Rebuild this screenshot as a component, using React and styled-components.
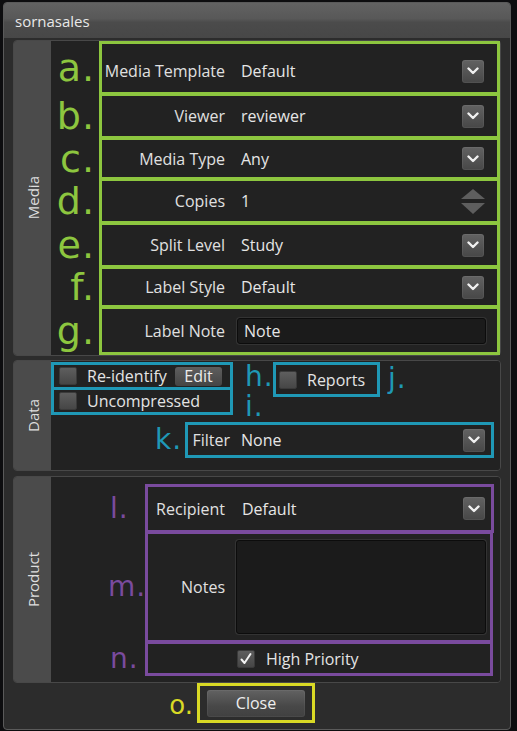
import React from 'react'
import styled, { createGlobalStyle } from 'styled-components'

const GREEN = '#8dc63f'
const TEAL = '#1f98b6'
const PURPLE = '#7a4b9e'
const YELLOW = '#d9d925'

const Global = createGlobalStyle`
  html, body {
    margin: 0;
    padding: 0;
    background: #0d0d0f;
  }
  body {
    font-family: "Open Sans", "Noto Sans", sans-serif;
    color: #e2e2e2;
  }
`

const Window = styled.div`
  margin: 2px 6px 0 3px;
  height: 726px;
  border: 1px solid #5a5a5a;
  border-radius: 4px;
  background: #2c2c2c;
  display: flex;
  flex-direction: column;
  overflow: hidden;
`

const TitleBar = styled.div`
  height: 35px;
  flex: none;
  display: flex;
  align-items: center;
  padding-left: 11px;
  font-size: 15px;
  color: #e8e8e8;
  background: linear-gradient(#626262 0%, #585858 45%, #4b4b4b 55%, #474747 100%);
`

const Body = styled.div`
  flex: 1;
  display: flex;
  flex-direction: column;
  padding: 2px 9px 0 9px;
`

const Section = styled.div`
  display: flex;
  box-sizing: border-box;
  border: 1px solid #484848;
  border-radius: 4px;
  margin-top: ${p => p.$gap || 0}px;
  height: ${p => p.$h}px;
  flex: none;
`

const Tab = styled.div`
  width: 37px;
  flex: none;
  background: #4b4b4b;
  border-radius: 3px 0 0 3px;
  display: flex;
  align-items: center;
  justify-content: center;
`

const TabText = styled.span`
  writing-mode: vertical-rl;
  transform: rotate(180deg);
  font-size: 15px;
  color: #dedede;
`

const Content = styled.div`
  flex: 1;
  background: #222222;
  border-radius: 0 3px 3px 0;
  display: flex;
  flex-direction: column;
  padding: ${p => p.$pad || '0'};
`

const Row = styled.div`
  display: flex;
  align-items: center;
  margin-top: ${p => p.$first ? 0 : -2}px;
`

const Letter = styled.div`
  font-family: "DejaVu Sans", sans-serif;
  font-size: ${p => p.$size || 38}px;
  color: ${p => p.$color};
  line-height: ${p => p.$lh ? `${p.$lh}px` : 1};
  width: ${p => p.$w || 48}px;
  flex: none;
  text-align: ${p => p.$align || 'right'};
  padding-right: ${p => p.$pr ?? 4}px;
  padding-left: ${p => p.$pl || 0}px;
  box-sizing: border-box;
  letter-spacing: 1px;
  white-space: nowrap;
`

const Box = styled.div`
  flex: 1;
  height: ${p => p.$h}px;
  box-sizing: border-box;
  border: 3px solid ${p => p.$color};
  display: flex;
  align-items: center;
  padding: ${p => p.$pad || '0 13px 0 0'};
`

const Label = styled.div`
  width: ${p => p.$w || 123}px;
  flex: none;
  text-align: right;
  font-size: 16px;
  color: #e0e0e0;
  margin-right: ${p => p.$gap || 16}px;
  white-space: nowrap;
`

const Value = styled.div`
  flex: 1;
  font-size: 16px;
  color: #e6e6e6;
`

const DropButton = styled.div`
  width: 22px;
  height: 23px;
  border-radius: 3px;
  background: linear-gradient(#626262, #474747);
  box-shadow: inset 0 0 0 1px rgba(255,255,255,0.06);
  display: flex;
  align-items: center;
  justify-content: center;
  flex: none;
`

const Chevron = () => (
  <svg width="12" height="8" viewBox="0 0 12 8">
    <path d="M1.5 1.5 L6 6 L10.5 1.5" fill="none" stroke="#f0f0f0" strokeWidth="2.4" strokeLinecap="round" strokeLinejoin="round" />
  </svg>
)

const Drop = () => (
  <DropButton><Chevron /></DropButton>
)

const Spinner = () => (
  <svg width="26" height="28" viewBox="0 0 26 28" style={{ marginRight: -2 }}>
    <polygon points="13,2 25,12 1,12" fill="#5e5e5e" />
    <polygon points="1,16 25,16 13,27" fill="#5e5e5e" />
  </svg>
)

const TextField = styled.div`
  flex: 1;
  height: ${p => p.$h || 26}px;
  box-sizing: border-box;
  background: #1b1b1b;
  border: 1px solid #0c0c0c;
  border-radius: 3px;
  box-shadow: 0 0 0 1px #333;
  font-size: 16px;
  color: #e6e6e6;
  display: flex;
  align-items: ${p => p.$top ? 'flex-start' : 'center'};
  padding-left: 6px;
`

const Check = styled.div`
  width: 18px;
  height: 18px;
  flex: none;
  box-sizing: border-box;
  border-radius: 2px;
  background: linear-gradient(#5e5e5e, #464646);
  border: 1px solid #3a3a3a;
  display: flex;
  align-items: center;
  justify-content: center;
  margin-right: ${p => p.$gap || 10}px;
`

const CheckText = styled.span`
  font-size: 16px;
  color: #e4e4e4;
  white-space: nowrap;
`

const SmallButton = styled.div`
  margin-left: auto;
  width: 47px;
  height: 19px;
  border-radius: 3px;
  background: linear-gradient(#5e5e5e, #454545);
  font-size: 16px;
  color: #ececec;
  display: flex;
  align-items: center;
  justify-content: center;
`

const DataTop = styled.div`
  display: flex;
  align-items: flex-start;
  margin-top: 1px;
`

const Stack = styled.div`
  width: 182px;
  flex: none;
  display: flex;
  flex-direction: column;
`

const LetterStack = styled.div`
  display: flex;
  flex-direction: column;
  width: 40px;
  padding-left: 12px;
  box-sizing: border-box;
`

const FilterRow = styled.div`
  display: flex;
  align-items: center;
  justify-content: flex-end;
  padding-right: 6px;
`

const Footer = styled.div`
  display: flex;
  justify-content: center;
  padding-right: 2px;
`

const CloseBox = styled.div`
  position: relative;
  width: 118px;
  height: 40px;
  box-sizing: border-box;
  border: 3px solid ${YELLOW};
  display: flex;
  align-items: center;
  justify-content: center;
`

const CloseLetter = styled.span`
  position: absolute;
  right: calc(100% + 7px);
  top: 4px;
  font-family: "DejaVu Sans", sans-serif;
  font-size: 26px;
  color: ${YELLOW};
`

const CloseButton = styled.div`
  width: 98px;
  height: 27px;
  border-radius: 3px;
  background: linear-gradient(#626262, #484848 60%, #404040);
  box-shadow: inset 0 0 0 1px rgba(255,255,255,0.05);
  font-size: 16px;
  color: #eeeeee;
  display: flex;
  align-items: center;
  justify-content: center;
`

const CheckMark = () => (
  <svg width="14" height="14" viewBox="0 0 14 14">
    <path d="M2.5 7.5 L5.5 11 L11.5 2" fill="none" stroke="#f2f2f2" strokeWidth="2" strokeLinecap="round" strokeLinejoin="round" />
  </svg>
)

const mediaRows = [
  { l: 'a.', label: 'Media Template', value: 'Default', h: 54, kind: 'drop', pt: 6 },
  { l: 'b.', label: 'Viewer', value: 'reviewer', h: 46, kind: 'drop' },
  { l: 'c.', label: 'Media Type', value: 'Any', h: 43, kind: 'drop' },
  { l: 'd.', label: 'Copies', value: '1', h: 46, kind: 'spin' },
  { l: 'e.', label: 'Split Level', value: 'Study', h: 46, kind: 'drop' },
  { l: 'f.', label: 'Label Style', value: 'Default', h: 42, kind: 'drop' },
  { l: 'g.', label: 'Label Note', value: 'Note', h: 49, kind: 'text' },
]

export default function App() {
  return (
    <>
      <Global />
      <Window>
        <TitleBar>sornasales</TitleBar>
        <Body>
          <Section $h={316}>
            <Tab><TabText>Media</TabText></Tab>
            <Content>
              {mediaRows.map((r, i) => (
                <Row key={r.l} $first={i === 0}>
                  <Letter $color={GREEN}>{r.l}</Letter>
                  <Box $h={r.h} $color={GREEN} $pad={`${r.pt || 0}px ${r.kind === 'text' ? 11 : 13}px 0 0`}>
                    <Label>{r.label}</Label>
                    {r.kind === 'text' ? (
                      <TextField style={{ marginLeft: -4 }}>{r.value}</TextField>
                    ) : (
                      <>
                        <Value>{r.value}</Value>
                        {r.kind === 'drop' ? <Drop /> : <Spinner />}
                      </>
                    )}
                  </Box>
                </Row>
              ))}
            </Content>
          </Section>

          <Section $h={111} $gap={4}>
            <Tab><TabText>Data</TabText></Tab>
            <Content>
              <DataTop>
                <Stack>
                  <Box $h={32} $color={TEAL} $pad="0 8px 0 5px">
                    <Check />
                    <CheckText>Re-identify</CheckText>
                    <SmallButton>Edit</SmallButton>
                  </Box>
                  <Box $h={32} $color={TEAL} $pad="0 8px 0 5px" style={{ marginTop: -3 }}>
                    <Check />
                    <CheckText>Uncompressed</CheckText>
                  </Box>
                </Stack>
                <LetterStack>
                  <Letter $color={TEAL} $size={28} $lh={30} $w={28} $align="left" $pr={0}>h.</Letter>
                  <Letter $color={TEAL} $size={28} $lh={30} $w={28} $align="left" $pr={0}>i.</Letter>
                </LetterStack>
                <Box $h={35} $color={TEAL} $pad="0 0 0 3px" style={{ flex: 'none', width: 107 }}>
                  <Check />
                  <CheckText>Reports</CheckText>
                </Box>
                <Letter $color={TEAL} $size={28} $lh={34} $w={30} $align="left" $pr={0} $pl={8}>j.</Letter>
              </DataTop>
              <FilterRow>
                <Letter $color={TEAL} $size={28} $lh={34} $w={30} $pr={5}>k.</Letter>
                <Box $h={36} $color={TEAL} $pad="0 6px 0 0" style={{ flex: 'none', width: 309 }}>
                  <Label $w={42} $gap={11}>Filter</Label>
                  <Value>None</Value>
                  <Drop />
                </Box>
              </FilterRow>
            </Content>
          </Section>

          <Section $h={207} $gap={5}>
            <Tab><TabText>Product</TabText></Tab>
            <Content $pad="7px 6px 0 0">
              <Row $first>
                <Letter $color={PURPLE} $size={28} $w={94} $align="left" $pl={59} $pr={0}>l.</Letter>
                <Box $h={49} $color={PURPLE} $pad="0 6px 0 0">
                  <Label $w={77} $gap={17}>Recipient</Label>
                  <Value>Default</Value>
                  <Drop />
                </Box>
              </Row>
              <Row>
                <Letter $color={PURPLE} $size={28} $w={94} $align="left" $pl={57} $pr={0}>m.</Letter>
                <Box $h={112} $color={PURPLE} $pad="0 4px 0 0" style={{ marginRight: 1 }}>
                  <Label $w={77} $gap={11}>Notes</Label>
                  <TextField $h={94} $top />
                </Box>
              </Row>
              <Row>
                <Letter $color={PURPLE} $size={28} $w={94} $align="left" $pl={59} $pr={0}>n.</Letter>
                <Box $h={35} $color={PURPLE} $pad="0 0 0 89px" style={{ marginRight: 1 }}>
                  <Check $gap={11}><CheckMark /></Check>
                  <CheckText>High Priority</CheckText>
                </Box>
              </Row>
            </Content>
          </Section>

          <Footer>
            <CloseBox>
              <CloseLetter>o.</CloseLetter>
              <CloseButton>Close</CloseButton>
            </CloseBox>
          </Footer>
        </Body>
      </Window>
    </>
  )
}
